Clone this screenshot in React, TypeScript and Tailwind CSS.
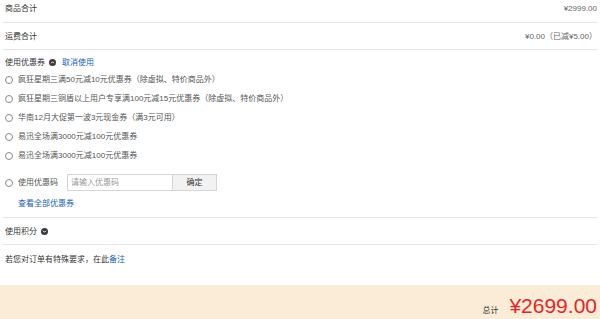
import React from "react";

const Chevron = ({ up }: { up?: boolean }) => (
  <svg width="7" height="7" viewBox="0 0 14 14" className="shrink-0">
    <circle cx="7" cy="7" r="7" fill="#3a3a3a" />
    {up ? (
      <path d="M4 8.5 L7 5.5 L10 8.5" stroke="#fff" strokeWidth="2" fill="none" />
    ) : (
      <path d="M4 5.5 L7 8.5 L10 5.5" stroke="#fff" strokeWidth="2" fill="none" />
    )}
  </svg>
);

const Radio = () => (
  <span className="w-[8px] h-[8px] rounded-full border border-[#8a8a8a] bg-white shrink-0" />
);

const coupons = [
  "疯狂星期三满50元减10元优惠券（除虚拟、特价商品外）",
  "疯狂星期三铜盾以上用户专享满100元减15元优惠券（除虚拟、特价商品外）",
  "华南12月大促第一波3元现金券（满3元可用）",
  "易迅全场满3000元减100元优惠券",
  "易迅全场满3000元减100元优惠券",
];

export default function App() {
  return (
    <div
      className="w-[600px] h-[319px] bg-white flex flex-col text-[8px] leading-[11px] text-[#333] overflow-hidden"
      style={{ fontFamily: '"Liberation Sans", "Noto Sans CJK SC", sans-serif' }}
    >
      <div className="flex flex-col pl-[2px] pr-[3px]">
        <div className="h-[23px] pb-[6px] flex items-center justify-between border-b border-[#e6e6e6] pl-[3px]">
          <span>商品合计</span>
          <span className="text-[#666]">¥2999.00</span>
        </div>
        <div className="h-[27px] flex items-center justify-between border-b border-[#e6e6e6] pl-[3px]">
          <span>运费合计</span>
          <span className="text-[#666]">¥0.00（已减¥5.00）</span>
        </div>
        <div className="flex flex-col pt-[5px] pb-[7px] border-b border-[#e6e6e6] pl-[3px]">
          <div className="h-[15px] flex items-center">
            <span>使用优惠券</span>
            <span className="ml-[4px]">
              <Chevron up />
            </span>
            <span className="ml-[6px] text-[#1a5fb4]">取消使用</span>
          </div>
          {coupons.map((c, i) => (
            <div key={i} className="h-[19px] flex items-center gap-[5px] text-[#555]">
              <Radio />
              <span>{c}</span>
            </div>
          ))}
          <div className="mt-[9px] h-[17px] flex items-center text-[#555]">
            <Radio />
            <span className="ml-[5px]">使用优惠码</span>
            <div className="ml-[9px] w-[106px] h-[17px] border border-[#d4d4d4] flex items-center pl-[3px] text-[#999]">
              请输入优惠码
            </div>
            <div className="w-[44px] h-[17px] border border-l-0 border-[#d4d4d4] bg-[#f2f2f2] flex items-center justify-center text-[#333]">
              确定
            </div>
          </div>
          <div className="mt-[5px] h-[14px] flex items-center pl-[13px] text-[#1a5fb4]">
            查看全部优惠券
          </div>
        </div>
        <div className="h-[27px] flex items-center border-b border-[#e6e6e6] pl-[3px]">
          <span>使用积分</span>
          <span className="ml-[4px]">
            <Chevron />
          </span>
        </div>
        <div className="h-[28px] flex items-center pl-[3px]">
          <span>
            若您对订单有特殊要求，在此<span className="text-[#1a5fb4]">备注</span>
          </span>
        </div>
      </div>
      <div className="mt-[12px] flex-1 bg-[#faecd6] flex justify-end items-baseline pt-[9px] pr-[3px]">
        <span className="text-[#333] text-[8px]">总计</span>
        <span className="ml-[11px] text-[#e4262b] text-[21px] leading-[24px]">¥2699.00</span>
      </div>
    </div>
  );
}
